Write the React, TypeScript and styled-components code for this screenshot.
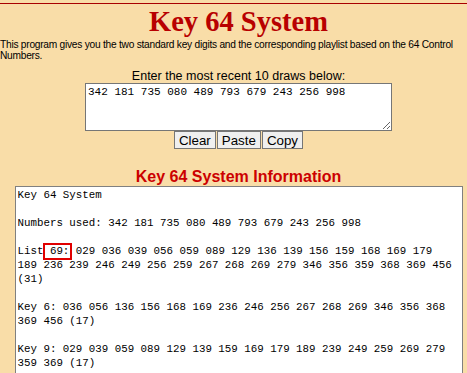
import { styled, createGlobalStyle } from "styled-components";

const GlobalStyle = createGlobalStyle`
  html, body {
    margin: 0;
    padding: 0;
    background: #f9dda8;
  }
  body {
    font-family: "Liberation Sans", Arial, sans-serif;
    color: #000;
  }
`;

const Page = styled.div`
  padding-top: 3px;
`;

const Header = styled.header`
  border-top: 1px solid #a80000;
`;

const Column = styled.div`
  padding-left: 10px;
  text-align: center;
`;

const Title = styled.h1`
  margin: 0;
  padding-top: 2px;
  font-family: "Liberation Serif", Georgia, serif;
  font-size: 28.5px;
  line-height: 32px;
  font-weight: bold;
  color: #b80000;
`;

const Intro = styled.p`
  margin: 1px 0 0;
  font-size: 10.2px;
  letter-spacing: -0.25px;
  line-height: 11px;
`;

const Label = styled.div`
  margin-top: 8px;
  font-size: 12.5px;
  line-height: 14px;
`;

const Draws = styled.textarea`
  display: block;
  box-sizing: border-box;
  margin: 0 auto;
  width: 307px;
  height: 48px;
  padding: 2px;
  border: 1px solid #767676;
  background: #fff;
  font-family: "Liberation Mono", Consolas, monospace;
  font-size: 11px;
  line-height: 13px;
  color: #000;
  resize: both;
  outline: none;
`;

const Buttons = styled.div`
  display: flex;
  justify-content: center;
  gap: 1px;
`;

const Button = styled.button`
  box-sizing: border-box;
  height: 18px;
  padding: 0 4px;
  border: 1px solid #767676;
  border-radius: 0;
  background: #efefef;
  font-family: "Liberation Sans", Arial, sans-serif;
  font-size: 13.33px;
  line-height: 15px;
  color: #000;
`;

const Heading = styled.h2`
  margin: 18px 0 0;
  font-size: 16px;
  line-height: 19px;
  font-weight: bold;
  color: #cc0000;
`;

const Output = styled.div`
  box-sizing: border-box;
  width: 448px;
  margin: 0 auto;
  padding: 1px 2px 2px 2px;
  border: 1px solid #808080;
  background: #fff;
  text-align: left;
  font-family: "Liberation Mono", Consolas, monospace;
  font-size: 10.8px;
  line-height: 14px;
  white-space: pre;
`;

const Mark = styled.span`
  position: relative;

  &::after {
    content: "";
    position: absolute;
    left: -7px;
    right: -3px;
    top: -2px;
    bottom: -3px;
    border: 2px solid #e00000;
  }
`;

const draws = "342 181 735 080 489 793 679 243 256 998";

export default function App() {
  return (
    <Page>
      <GlobalStyle />
      <Header>
        <Column>
          <Title>Key 64 System</Title>
        </Column>
        <Intro>
          This program gives you the two standard key digits and the
          corresponding playlist based on the 64 Control Numbers.
        </Intro>
      </Header>
      <Column>
        <Label>Enter the most recent 10 draws below:</Label>
        <Draws defaultValue={draws} spellCheck={false} />
        <Buttons>
          <Button>Clear</Button>
          <Button>Paste</Button>
          <Button>Copy</Button>
        </Buttons>
        <Heading>Key 64 System Information</Heading>
        <Output>
          {"Key 64 System\n\n"}
          {`Numbers used: ${draws}\n\n`}
          {"List "}
          <Mark>69:</Mark>
          {" 029 036 039 056 059 089 129 136 139 156 159 168 169 179\n"}
          {"189 236 239 246 249 256 259 267 268 269 279 346 356 359 368 369 456\n"}
          {"(31)\n\n"}
          {"Key 6: 036 056 136 156 168 169 236 246 256 267 268 269 346 356 368\n"}
          {"369 456 (17)\n\n"}
          {"Key 9: 029 039 059 089 129 139 159 169 179 189 239 249 259 269 279\n"}
          {"359 369 (17)\n\n"}
        </Output>
      </Column>
    </Page>
  );
}
